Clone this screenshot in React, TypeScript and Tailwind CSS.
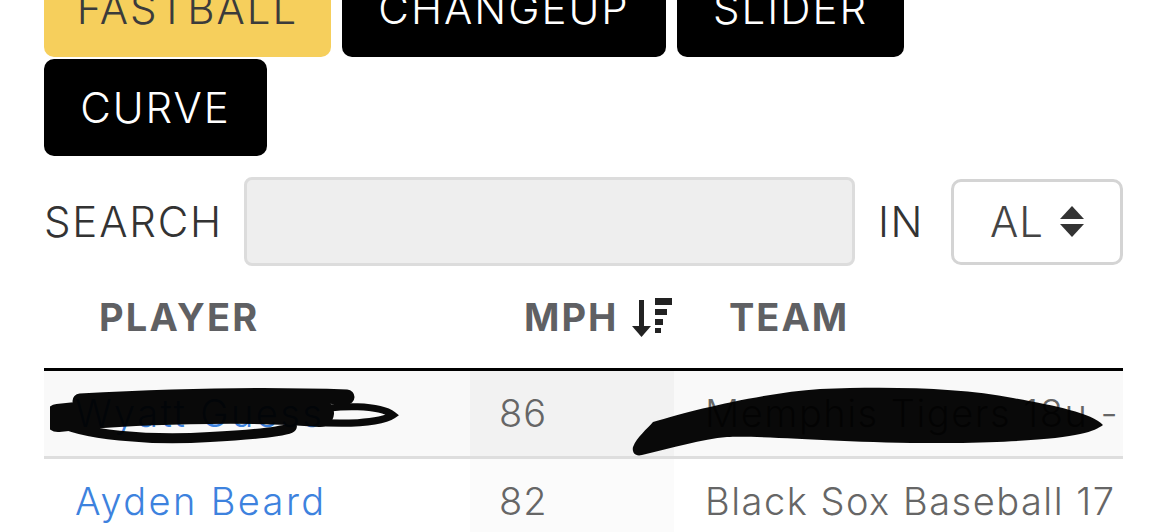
import { useState } from 'react'

const pitches = [
  { name: 'FASTBALL', w: 'w-[287px]' },
  { name: 'CHANGEUP', w: 'w-[324px]' },
  { name: 'SLIDER', w: 'w-[227px]' },
  { name: 'CURVE', w: 'w-[223px]' },
]

const rows = [
  { player: 'Wyatt Guess', mph: 86, team: 'Memphis Tigers 18u -', hidden: true },
  { player: 'Ayden Beard', mph: 82, team: 'Black Sox Baseball 17', hidden: false },
]

function SortIcon() {
  return (
    <svg width="40" height="40" viewBox="0 0 40 40" className="ml-[14px]">
      <rect x="7" y="2" width="5" height="29" fill="#222" />
      <polygon points="0,28 19,28 9.5,39" fill="#222" />
      <rect x="23" y="0" width="17" height="7" fill="#222" />
      <rect x="23" y="11" width="12" height="6" fill="#222" />
      <rect x="23" y="21" width="8" height="6" fill="#222" />
      <rect x="23" y="30" width="6" height="5" fill="#222" />
    </svg>
  )
}

function Caret() {
  return (
    <svg width="24" height="32" viewBox="0 0 24 32">
      <polygon points="12,0 24,13 0,13" fill="#333" />
      <polygon points="0,18 24,18 12,31" fill="#333" />
    </svg>
  )
}

// marker scribbles over the redacted row (positioned from the text box's top-left)
function PlayerScribble() {
  return (
    <svg className="pointer-events-none absolute left-[-25px] top-[2px] z-10 opacity-[0.96]" width="350" height="60" viewBox="0 0 350 60">
      <path d="M30 14 C120 9 220 7 297 10" stroke="#000" strokeWidth="15" fill="none" strokeLinecap="round" />
      <path d="M8 31 C80 23 200 20 270 26" stroke="#000" strokeWidth="28" fill="none" strokeLinecap="round" />
      <path d="M6 33 C30 48 100 54 160 50 C220 47 250 42 240 38" stroke="#000" strokeWidth="10" fill="none" strokeLinecap="round" />
      <path d="M258 25 C290 17 330 18 343 28 C330 37 290 37 258 35" stroke="#000" strokeWidth="7" fill="none" strokeLinecap="round" />
    </svg>
  )
}

function TeamScribble() {
  return (
    <svg className="pointer-events-none absolute left-[-73px] top-[0px] z-10 opacity-[0.96]" width="480" height="75" viewBox="0 0 480 75">
      <path
        d="M1 62 C5 52 15 44 21 37 C60 25 130 8 188 4 C260 1 330 3 381 13 C420 20 460 28 471 40 C460 48 440 56 321 58 C220 59 130 50 95 52 C70 54 40 63 10 70 C2 72 0 66 1 62 Z"
        fill="#000"
      />
    </svg>
  )
}

export default function App() {
  const [active, setActive] = useState('FASTBALL')
  const [league] = useState('AL')

  return (
    <div className="h-[532px] w-[1167px] overflow-hidden bg-white px-[44px] font-['Inter','Noto_Sans',sans-serif]">
      {/* pitch type buttons */}
      <div className="mt-[-40px] flex flex-wrap gap-x-[11px] gap-y-[2px]">
        {pitches.map(p => (
          <button
            key={p.name}
            onClick={() => setActive(p.name)}
            className={`${p.w} flex h-[97px] items-center justify-center rounded-[10px] text-[42px] font-light tracking-[2px] ${
              active === p.name ? 'bg-[#f6cf5c] text-[#3b3b3b]' : 'bg-black text-white'
            }`}
          >
            {p.name}
          </button>
        ))}
      </div>

      {/* search */}
      <div className="mt-[21px] flex h-[89px] items-center">
        <span className="w-[200px] text-[42px] font-light tracking-[1.8px] text-[#333]">SEARCH</span>
        <input className="h-[89px] w-[611px] rounded-[8px] border-[3px] border-[#dcdcdc] bg-[#eeeeee]" />
        <span className="ml-[23px] w-[73px] text-[42px] font-light tracking-[1.5px] text-[#333]">IN</span>
        <div className="flex h-[86px] w-[172px] items-center justify-between rounded-[10px] border-[3px] border-[#d4d4d4] pl-[36px] pr-[36px]">
          <span className="text-[42px] font-light tracking-[1px] text-[#444]">{league}</span>
          <Caret />
        </div>
      </div>

      {/* table */}
      <table className="w-full border-collapse">
        <thead>
          <tr className="h-[103px] border-b-[3px] border-black text-left">
            <th className="w-[426px] pl-[55px] pt-[2px] text-[38px] font-bold tracking-[2.2px] text-[#5f6063]">PLAYER</th>
            <th className="w-[204px] pl-[54px] pt-[2px] text-[38px] font-bold tracking-[2px] text-[#5f6063]">
              <div className="flex items-center">
                MPH
                <SortIcon />
              </div>
            </th>
            <th className="pl-[55px] pt-[2px] text-[38px] font-bold tracking-[2px] text-[#5f6063]">TEAM</th>
          </tr>
        </thead>
        <tbody>
          {rows.map((r, i) => (
            <tr key={r.player} className={`h-[88px] ${i === 0 ? 'border-b-[3px] border-[#dedede] bg-[#f9f9f9]' : ''}`}>
              <td className="pl-[31px] text-[38px] font-light tracking-[2.4px] text-[#3d82de]">
                <div className="relative whitespace-nowrap">
                  {r.player}
                  {r.hidden && <PlayerScribble />}
                </div>
              </td>
              <td className={`pl-[29px] text-[38px] font-light tracking-[1px] text-[#666] ${i === 0 ? 'bg-[#f2f2f2]' : 'bg-[#fbfbfb]'}`}>{r.mph}</td>
              <td className="pl-[31px] text-[38px] font-light tracking-[1.5px] text-[#666]">
                <div className="relative whitespace-nowrap">
                  {r.team}
                  {r.hidden && <TeamScribble />}
                </div>
              </td>
            </tr>
          ))}
        </tbody>
      </table>
    </div>
  )
}
